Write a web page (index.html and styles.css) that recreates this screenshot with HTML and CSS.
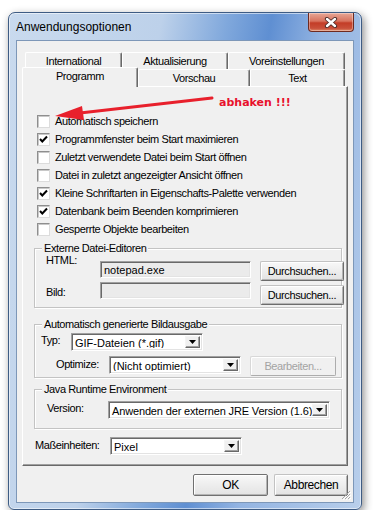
FILE: index.html
```html
<!DOCTYPE html>
<html lang="de">
<head>
  <meta charset="UTF-8" />
  <title>Anwendungsoptionen</title>
  <link rel="stylesheet" href="styles.css">
</head>
<body>
  <div class="window">
    <div class="titlebar">
      <span class="title">Anwendungsoptionen</span>
      <button class="close" aria-label="Schließen">
        <svg width="14" height="11" viewBox="0 0 14 11">
          <path d="M3 2 L11 9 M11 2 L3 9" stroke="#4a2a26" stroke-width="4.2" stroke-linecap="round" />
          <path d="M3 2 L11 9 M11 2 L3 9" stroke="#fff" stroke-width="2.4" stroke-linecap="round" />
        </svg>
      </button>
    </div>

    <div class="client">
      <div class="tabs">
        <div class="tabrow back">
          <div class="tab" style="width:97px">International</div>
          <div class="tab" style="width:106px">Aktualisierung</div>
          <div class="tab" style="width:117px">Voreinstellungen</div>
        </div>
        <div class="tabrow front">
          <div class="tab active" style="width:116px">Programm</div>
          <div class="tab" style="width:112px">Vorschau</div>
          <div class="tab" style="width:95px">Text</div>
        </div>
      </div>

      <div class="panel">
        <ul class="checks">
          <li><span class="box"></span>Automatisch speichern</li>
          <li><span class="box checked"></span>Programmfenster beim Start maximieren</li>
          <li><span class="box"></span>Zuletzt verwendete Datei beim Start öffnen</li>
          <li><span class="box"></span>Datei in zuletzt angezeigter Ansicht öffnen</li>
          <li><span class="box checked"></span>Kleine Schriftarten in Eigenschafts-Palette verwenden</li>
          <li><span class="box checked"></span>Datenbank beim Beenden komprimieren</li>
          <li><span class="box"></span>Gesperrte Objekte bearbeiten</li>
        </ul>

        <div class="group editors">
          <div class="group-title">Externe Datei-Editoren</div>
          <div class="editor-grid">
            <span class="lbl html-lbl">HTML:</span>
            <div class="field html-field">notepad.exe</div>
            <button class="btn html-btn">Durchsuchen...</button>
            <span class="lbl bild-lbl">Bild:</span>
            <div class="field bild-field"></div>
            <button class="btn bild-btn">Durchsuchen...</button>
          </div>
        </div>

        <div class="group output">
          <div class="group-title">Automatisch generierte Bildausgabe</div>
          <div class="row typ-row">
            <span class="lbl">Typ:</span>
            <div class="combo"><span class="combo-text">GIF-Dateien (*.gif)</span><span class="combo-btn"></span></div>
          </div>
          <div class="row opt-row">
            <span class="lbl">Optimize:</span>
            <div class="combo"><span class="combo-text">(Nicht optimiert)</span><span class="combo-btn"></span></div>
            <button class="btn disabled">Bearbeiten...</button>
          </div>
        </div>

        <div class="group jre">
          <div class="group-title">Java Runtime Environment</div>
          <div class="row jre-row">
            <span class="lbl">Version:</span>
            <div class="combo"><span class="combo-text tight">Anwenden der externen JRE Version (1.6)</span><span class="combo-btn"></span></div>
          </div>
        </div>

        <div class="row units-row">
          <span class="lbl">Maßeinheiten:</span>
          <div class="combo"><span class="combo-text">Pixel</span><span class="combo-btn"></span></div>
        </div>
      </div>

      <div class="footer">
        <button class="btn ok">OK</button>
        <button class="btn cancel">Abbrechen</button>
      </div>

      <svg class="grip" width="10" height="10" viewBox="0 0 10 10">
        <path d="M9 1 L1 9 M9 4 L4 9 M9 7 L7 9" stroke="#a6a6a6" stroke-width="1" />
        <path d="M10 2 L2 10 M10 5 L5 10 M10 8 L8 10" stroke="#fff" stroke-width="1" />
      </svg>
    </div>
  </div>

  <!-- annotation drawn over the screenshot -->
  <svg class="arrow" width="373" height="522" viewBox="0 0 373 522">
    <path d="M212 98 L80 113" stroke="#e8202c" stroke-width="3" stroke-linecap="round" />
    <polygon points="55,116 82,106 84,120" fill="#e8202c" />
  </svg>
  <span class="note">abhaken !!!</span>
</body>
</html>
```

FILE: styles.css
```css
body {
  margin: 0;
  background: #fff;
  font-family: "Liberation Sans", Arial, sans-serif;
  font-size: 11px;
  letter-spacing: -0.4px;
  color: #000;
}

.window {
  box-sizing: border-box;
  width: 354px;
  height: 498px;
  margin: 12px 0 0 8px;
  padding: 0 7px 6px 7px;
  border: 1px solid #3e5c84;
  border-radius: 7px 7px 6px 6px;
  background: linear-gradient(100deg, #c9daee 0%, #bdd1ea 35%, #80a8dc 50%, #5f8fd2 60%, #93b4e2 72%, #b9cfeb 100%);
  box-shadow: inset 0 0 0 1px rgba(255, 255, 255, 0.55), 2px 3px 8px rgba(0, 0, 0, 0.45);
}

.titlebar {
  display: flex;
  align-items: flex-start;
  height: 27px;
}

.title {
  margin-top: 7px;
  font-size: 12px;
  letter-spacing: 0;
  line-height: 14px;
  color: #000;
}

.close {
  margin-left: auto;
  width: 46px;
  height: 19px;
  padding: 0;
  display: flex;
  align-items: center;
  justify-content: center;
  border: 1px solid #6e2a20;
  border-top: 0;
  border-radius: 0 0 4px 4px;
  background: linear-gradient(#e7a796 0%, #d8735e 45%, #c33d27 55%, #c9503a 85%, #e08c6c 100%);
  box-shadow: inset 0 0 0 1px rgba(255, 255, 255, 0.35);
}

.client {
  position: relative;
  box-sizing: border-box;
  height: 463px;
  background: #f0f0f0;
  border: 1px solid #7d97b8;
}

.tabs {
  padding-top: 11px;
}

.tabrow {
  display: flex;
  height: 17px;
}

.tabrow.back {
  padding-left: 8px;
}

.tabrow.front {
  padding-left: 5px;
}

.tab {
  box-sizing: border-box;
  height: 17px;
  border: 1px solid;
  border-color: #fff #696969 transparent #fff;
  border-bottom: 0;
  border-radius: 2px 2px 0 0;
  box-shadow: inset -1px 0 0 #a0a0a0;
  background: #f0f0f0;
  text-align: center;
  line-height: 16px;
}

.tab.active {
  position: relative;
  z-index: 1;
  height: 20px;
  margin-top: -2px;
}

.panel {
  box-sizing: border-box;
  width: 326px;
  height: 380px;
  margin-left: 5px;
  border: 1px solid;
  border-color: #fff #696969 #696969 #fff;
  box-shadow: inset -1px -1px 0 #a0a0a0;
}

.checks {
  list-style: none;
  margin: 0;
  padding: 25px 0 0 14px;
}

.checks li {
  display: flex;
  align-items: center;
  height: 18px;
}

.box {
  box-sizing: border-box;
  width: 13px;
  height: 13px;
  margin-right: 5px;
  border: 1px solid;
  border-color: #8e8e8e #dcdcdc #dcdcdc #8e8e8e;
  box-shadow: inset 1px 1px 0 #c8c8c8;
  background: #fff;
}

.box.checked {
  background: #fff url("data:image/svg+xml;utf8,<svg xmlns='http://www.w3.org/2000/svg' width='11' height='11'><path d='M2 5 L4.3 7.5 L9 2.5' fill='none' stroke='black' stroke-width='2'/></svg>") center no-repeat;
}

.group {
  box-sizing: border-box;
  width: 308px;
  margin-left: 11px;
  border: 1px solid #c3c3c3;
  box-shadow: 1px 1px 0 #fff, inset 1px 1px 0 #fff;
}

.group-title {
  display: table;
  margin: -7px 0 0 7px;
  padding: 0 2px;
  line-height: 13px;
  background: #f0f0f0;
}

.lbl {
  line-height: 13px;
}

.editors {
  margin-top: 10px;
}

.editor-grid {
  display: grid;
  grid-template-columns: 45px 151px 84px;
  column-gap: 9px;
  align-items: start;
  padding: 0 0 2px 11px;
}

.html-lbl { margin-top: -1px; }
.html-field, .html-btn { margin-top: 6px; }
.bild-field { margin-top: 1px; }
.bild-lbl { margin-top: 5px; }
.bild-btn { margin-top: 4px; }

.field {
  box-sizing: border-box;
  height: 17px;
  padding: 2px 3px;
  line-height: 13px;
  border: 1px solid;
  border-color: #a0a0a0 #fff #fff #a0a0a0;
  box-shadow: inset 1px 1px 0 #696969, inset -1px -1px 0 #e3e3e3;
  background: #ebebeb;
  font-size: 11px;
  letter-spacing: 0;
}

.btn {
  box-sizing: border-box;
  height: 20px;
  padding: 0;
  font-family: inherit;
  font-size: 11px;
  letter-spacing: -0.4px;
  color: #000;
  border: 1px solid;
  border-color: #c2c2c2 #6c6c6c #6c6c6c #c2c2c2;
  border-radius: 2px;
  background: linear-gradient(#f8f8f8, #e3e3e3);
  box-shadow: inset 1px 1px 0 #fff, inset -1px -1px 0 #b4b4b4;
}

.btn.disabled {
  color: #a3a3a3;
  border-color: #d8d8d8 #acacac #acacac #d8d8d8;
  background: #f0f0f0;
  box-shadow: inset 1px 1px 0 #fff;
}

.row {
  display: flex;
  align-items: flex-start;
}

.combo {
  box-sizing: border-box;
  display: flex;
  height: 18px;
  padding: 2px;
  border: 1px solid;
  border-color: #a0a0a0 #fff #fff #a0a0a0;
  box-shadow: inset 1px 1px 0 #696969, inset -1px -1px 0 #e3e3e3;
  background: #fff;
}

.combo-text {
  flex: 1;
  padding-left: 1px;
  line-height: 14px;
  font-size: 11px;
  letter-spacing: 0;
  white-space: nowrap;
  overflow: hidden;
}

.combo-text.tight {
  letter-spacing: -0.15px;
}

.combo-btn {
  box-sizing: border-box;
  width: 15px;
  border: 1px solid;
  border-color: #f4f4f4 #696969 #696969 #f4f4f4;
  box-shadow: inset -1px -1px 0 #a0a0a0;
  background: #f0f0f0 url("data:image/svg+xml;utf8,<svg xmlns='http://www.w3.org/2000/svg' width='7' height='4'><polygon points='0,0 7,0 3.5,4' fill='black'/></svg>") center no-repeat;
}

.output {
  margin-top: 16px;
}

.typ-row {
  padding-left: 6px;
}

.typ-row .lbl {
  width: 30px;
  margin-top: 3px;
}

.typ-row .combo {
  width: 132px;
  margin-top: 2px;
}

.opt-row {
  padding: 0 0 1px 21px;
}

.opt-row .lbl {
  width: 53px;
  margin-top: 7px;
}

.opt-row .combo {
  width: 132px;
  margin-top: 5px;
}

.opt-row .btn {
  width: 86px;
  margin: 5px 0 0 9px;
}

.jre {
  margin-top: 11px;
}

.jre-row {
  padding: 0 0 9px 12px;
}

.jre-row .lbl {
  width: 61px;
  margin-top: 6px;
}

.jre-row .combo {
  width: 222px;
  margin-top: 5px;
}

.units-row {
  margin-top: 8px;
  padding-left: 12px;
}

.units-row .lbl {
  width: 75px;
  margin-top: 2px;
}

.units-row .combo {
  width: 132px;
}

.footer {
  display: flex;
  justify-content: flex-end;
  gap: 6px;
  margin-top: 8px;
  padding-right: 5px;
}

.footer .btn {
  height: 22px;
  font-size: 12px;
}

.btn.ok {
  width: 75px;
  border-color: #707070;
}

.btn.cancel {
  width: 74px;
}

.grip {
  position: absolute;
  right: 2px;
  bottom: 2px;
}

.arrow {
  position: absolute;
  left: 0;
  top: 0;
  pointer-events: none;
}

.note {
  position: absolute;
  left: 219px;
  top: 96px;
  font-family: "DejaVu Sans", sans-serif;
  font-weight: bold;
  font-size: 11px;
  letter-spacing: 0;
  color: #e8112d;
}
```
